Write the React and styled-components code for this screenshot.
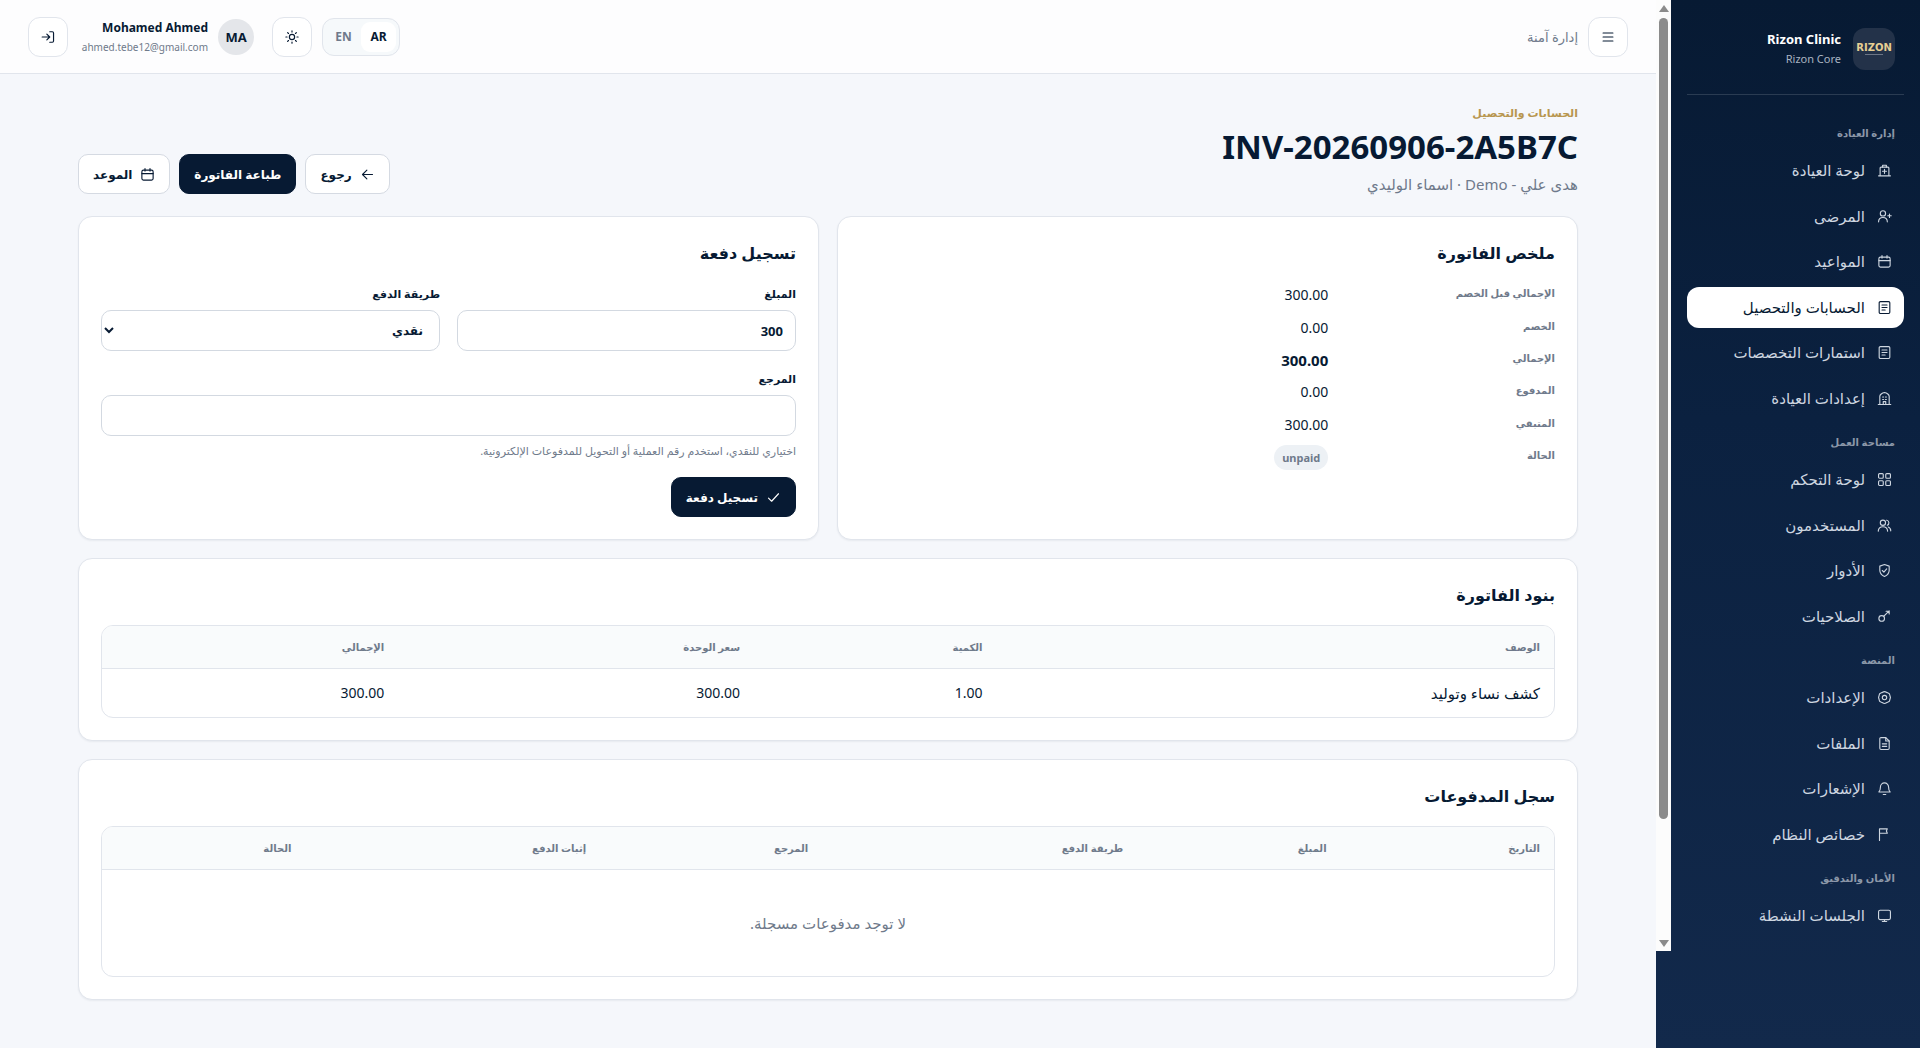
import React, { useState } from "react";
import styled, { createGlobalStyle, css } from "styled-components";

const navy = "#071a33";
const muted = "#6f7a8b";
const line = "#e1e5ec";

const GlobalStyle = createGlobalStyle`
  *, *::before, *::after { box-sizing: border-box; }
  body {
    margin: 0;
    background: #f5f7fb;
    color: ${navy};
    font-family: "Noto Sans", "Open Sans", "DejaVu Sans", sans-serif;
    font-size: 14px;
  }
  button, input, select { font: inherit; color: inherit; }
  h1, h2, p, dl, dd { margin: 0; }
`;

/* ---------- icons ---------- */

const ICONS = {
  clinic: <><path d="M2.5 20.5h19M5 20.5V8a1.5 1.5 0 0 1 1.5-1.5h11A1.5 1.5 0 0 1 19 8v12.5" /><path d="M9 6.5v-3h6v3M12 10v6.5M8.8 13.2h6.4" /></>,
  patient: <><circle cx="9.5" cy="7" r="4.2" /><path d="M2.5 20.5c0-4.5 3-7 7-7s7 2.5 7 7M20 8v5.5M17.2 10.7h5.6" /></>,
  calendar: <><rect x="3" y="5" width="18" height="16" rx="2.5" /><path d="M3 10.5h18M8 2.5v4M16 2.5v4" /></>,
  receipt: <><rect x="3.5" y="2.5" width="17" height="19" rx="2" /><path d="M8 8h8M8 12h8M8 16h5" /></>,
  building: <><path d="M2 21.5h20M4.5 21.5v-13C4.5 6 8 3 12 2.5c4 .5 7.5 3.500 7.500 6v13" /><path d="M9 9.5h1.5M13.5 9.5H15M9 13.5h1.5M13.5 13.5H15M10 21.5V17h4v4.5" /></>,
  grid: <><rect x="2.5" y="2.5" width="7.5" height="7.5" rx="1.5" /><rect x="14" y="2.5" width="7.5" height="7.5" rx="1.5" /><rect x="2.5" y="14" width="7.5" height="7.5" rx="1.5" /><rect x="14" y="14" width="7.5" height="7.5" rx="1.5" /></>,
  users: <><circle cx="9.5" cy="7.5" r="4.2" /><path d="M2 21c.3-4.5 3-7 7.5-7s7.2 2.5 7.5 7M15.5 3.5a4.2 4.2 0 0 1 1 8M18 14.5c2.5 1 4 3 4 6" /></>,
  shield: <><path d="M12 2.5 19.5 5v6.5c0 4.5-3 8-7.5 10-4.5-2-7.500-5.500-7.500-10V5z" /><path d="m8.5 12 2.5 2.5 4.5-5" /></>,
  key: <><circle cx="7.5" cy="15" r="4.5" /><path d="M11 11.5 19.5 3M14.5 3.5h5V8" /></>,
  settings: <><path d="M12 2.5c2.5 0 3 1.500 5 2s3.500 1.500 3.500 3.500S21.500 10.500 21.500 12s-1 2-1 4-1.500 3-3.500 3.500-2.500 2-5 2-3-1.500-5-2S3.500 18 3.500 16s-1-2.500-1-4 1-2 1-4S5 5 7 4.500s2.500-2 5-2z" /><circle cx="12" cy="12" r="3.5" /></>,
  file: <><path d="M14 2.5H6.5a2 2 0 0 0-2 2v15a2 2 0 0 0 2 2h11a2 2 0 0 0 2-2V8z" /><path d="M14 2.5V8h5.500M8.500 12.500h7M8.500 16.500h7" /></>,
  bell: <><path d="M3 17.5h18c-2-2-2.500-4-2.500-8a6.500 6.500 0 0 0-13 0c0 4-.5 6-2.500 8z" /><path d="M10 21.5h4" /></>,
  flag: <path d="M4 21.5V3h12.5L15 6.500l1.500 3.500H4" />,
  monitor: <><rect x="2.5" y="3.5" width="19" height="15" rx="2.5" /><path d="M8.5 21.5h7M12 18.5v3" /></>,
  menu: <path d="M3.5 5h17M3.5 12h17M3.5 19h17" />,
  sun: <><circle cx="12" cy="12" r="4.5" /><path d="M12 1.5v2M12 20.5v2M1.5 12h2M20.5 12h2M4.5 4.5 6 6M18 18l1.5 1.5M4.5 19.5 6 18M18 6l1.5-1.5" /></>,
  logout: <><path d="M2 12h13M10 7l5 5-5 5" /><path d="M15 3h4.5a2 2 0 0 1 2 2v14a2 2 0 0 1-2 2H15" /></>,
  back: <path d="M20 12H4M11 5l-7 7 7 7" />,
  check: <path d="m4 13 5 5L20 6" />,
};

const Svg = styled.svg`
  flex: none;
  width: ${(p) => p.$size}px;
  height: ${(p) => p.$size}px;
  fill: none;
  stroke: currentColor;
  stroke-width: ${(p) => p.$weight};
  stroke-linecap: round;
  stroke-linejoin: round;
`;

function Icon({ name, size = 15, weight = 1.8 }) {
  return (
    <Svg viewBox="0 0 24 24" $size={size} $weight={weight} aria-hidden="true">
      {ICONS[name]}
    </Svg>
  );
}

/* ---------- data ---------- */

const NAV = [
  {
    title: "إدارة العيادة",
    items: [
      ["clinic", "لوحة العيادة"],
      ["patient", "المرضى"],
      ["calendar", "المواعيد"],
      ["receipt", "الحسابات والتحصيل"],
      ["receipt", "استمارات التخصصات"],
      ["building", "إعدادات العيادة"],
    ],
  },
  {
    title: "مساحة العمل",
    items: [
      ["grid", "لوحة التحكم"],
      ["users", "المستخدمون"],
      ["shield", "الأدوار"],
      ["key", "الصلاحيات"],
    ],
  },
  {
    title: "المنصة",
    items: [
      ["settings", "الإعدادات"],
      ["file", "الملفات"],
      ["bell", "الإشعارات"],
      ["flag", "خصائص النظام"],
    ],
  },
  { title: "الأمان والتدقيق", items: [["monitor", "الجلسات النشطة"]] },
];

const SUMMARY = [
  ["الإجمالي قبل الخصم", "300.00"],
  ["الخصم", "0.00"],
  ["الإجمالي", "300.00", "total"],
  ["المدفوع", "0.00"],
  ["المتبقي", "300.00"],
  ["الحالة", "unpaid", "badge"],
];

// [label, column share in %]
const ITEM_COLS = [["الوصف", 38.4], ["الكمية", 16.7], ["سعر الوحدة", 24.5], ["الإجمالي", 20.4]];

const PAYMENT_COLS = [
  ["التاريخ", 14.7],
  ["المبلغ", 14],
  ["طريقة الدفع", 21.7],
  ["المرجع", 15.3],
  ["إثبات الدفع", 20.3],
  ["الحالة", 14],
];

/* ---------- shell ---------- */

const Shell = styled.div`
  display: flex;
  min-height: 100vh;
`;

const Sidebar = styled.aside`
  flex: none;
  display: flex;
  align-items: flex-start;
  width: 264px;
  background: linear-gradient(180deg, #071a33 0%, #0b2140 40%, #12294b 100%);
  color: #ced6e0;
`;

const SideScroll = styled.div`
  flex: 1;
  min-width: 0;
  padding: 16px;
`;

const ScrollTrack = styled.div`
  order: 1;
  flex: none;
  display: flex;
  flex-direction: column;
  align-items: center;
  gap: 6px;
  width: 15px;
  height: calc(100vh - 97px);
  padding: 5px 0 4px;
  background: #fcfcfc;
`;

const ScrollArrow = styled.span`
  border: 5px solid transparent;
  ${(p) =>
    p.$down
      ? css`border-top: 7px solid #8b8b8b; border-bottom: 0;`
      : css`border-bottom: 7px solid #8b8b8b; border-top: 0;`}
`;

const ScrollThumb = styled.span`
  width: 9px;
  height: 85%;
  margin-bottom: auto;
  border-radius: 5px;
  background: #8b8b8b;
`;

const Brand = styled.div`
  display: flex;
  align-items: center;
  gap: 12px;
  padding: 12px 9px 24px;
  border-bottom: 1px solid rgba(255, 255, 255, 0.14);
`;

const Logo = styled.div`
  display: flex;
  flex-direction: column;
  align-items: center;
  justify-content: center;
  gap: 2px;
  width: 42px;
  height: 42px;
  border-radius: 12px;
  background: #233249;
  color: #e6cf93;
  font-family: "DejaVu Sans", sans-serif;
  font-size: 10px;
  font-weight: 700;
  line-height: 8px;

  &::after {
    content: "";
    width: 18px;
    height: 1px;
    background: #6c7686;
  }
`;

const BrandName = styled.div`
  color: #fff;
  font-size: 13px;
  font-weight: 700;
  line-height: 20px;
`;

const BrandSub = styled.div`
  color: #a9b3c1;
  font-size: 11px;
  line-height: 20px;
  text-align: right;
`;

const Nav = styled.nav`
  padding-top: 15px;
`;

const NavTitle = styled.div`
  padding: 14px 9px 8px;
  color: #8c98a9;
  font-size: 10px;
  font-weight: 700;
  line-height: 18px;
`;

const NavList = styled.div`
  display: grid;
  gap: 4px;
`;

const NavLink = styled.a`
  display: flex;
  align-items: center;
  gap: 12px;
  padding: 8px 12px;
  border-radius: 12px;
  color: inherit;
  font-size: 15px;
  line-height: 1.7;
  text-decoration: none;
  white-space: nowrap;

  &[aria-current="page"] {
    background: #fff;
    color: ${navy};
  }
`;

const Page = styled.div`
  flex: 1;
  min-width: 0;
`;

const Topbar = styled.header`
  display: flex;
  align-items: center;
  justify-content: space-between;
  height: 74px;
  padding: 0 28px;
  border-bottom: 1px solid ${line};
  background: #fdfdfe;
`;

const Cluster = styled.div`
  display: flex;
  align-items: center;
  gap: 10px;
`;

const IconButton = styled.button`
  display: grid;
  place-items: center;
  width: 40px;
  height: 40px;
  padding: 0;
  border: 1px solid ${line};
  border-radius: 12px;
  background: #fff;
  cursor: pointer;
`;

const Hint = styled.span`
  color: ${muted};
  font-size: 13px;
`;

const LangSwitch = styled.div`
  display: flex;
  padding: 3px;
  border: 1px solid ${line};
  border-radius: 12px;
  background: #f6f9fb;
`;

const LangButton = styled.button`
  width: 35px;
  height: 30px;
  padding: 0;
  border: 0;
  border-radius: 9px;
  background: ${(p) => (p.$active ? "#fff" : "transparent")};
  color: ${(p) => (p.$active ? navy : muted)};
  font-size: 12px;
  font-weight: 700;
  cursor: pointer;
`;

const User = styled.div`
  display: flex;
  align-items: center;
  gap: 10px;
  padding-right: 8px;
`;

const UserText = styled.div`
  min-width: 130px;
`;

const Avatar = styled.span`
  display: grid;
  place-items: center;
  width: 36px;
  height: 36px;
  border-radius: 50%;
  background: #e4e6ea;
  font-size: 13px;
  font-weight: 700;
`;

const UserName = styled.div`
  font-size: 12px;
  font-weight: 700;
  line-height: 20px;
`;

const UserMail = styled.div`
  color: ${muted};
  font-size: 10px;
  line-height: 18px;
`;

/* ---------- page ---------- */

const Main = styled.main`
  display: grid;
  gap: 18px;
  max-width: 1556px;
  margin: 0 auto;
  padding: 28px;
`;

const PageHead = styled.div`
  display: flex;
  align-items: flex-end;
  justify-content: space-between;
`;

const Eyebrow = styled.p`
  color: #b8964f;
  font-size: 11px;
  font-weight: 700;
  line-height: 22px;
`;

const Title = styled.h1`
  font-size: 33px;
  font-weight: 700;
  line-height: 46px;
`;

const Subtitle = styled.p`
  color: ${muted};
  font-size: 15px;
  line-height: 28px;
`;

const Actions = styled.div`
  display: flex;
  gap: 9px;
  padding-bottom: 4px;
`;

const Button = styled.button`
  display: inline-flex;
  align-items: center;
  gap: 8px;
  height: 40px;
  padding: 0 14px;
  border: 1px solid ${(p) => (p.$primary ? navy : "#d5dae2")};
  border-radius: 10px;
  background: ${(p) => (p.$primary ? navy : "#fff")};
  color: ${(p) => (p.$primary ? "#fff" : navy)};
  font-size: 12px;
  font-weight: 700;
  white-space: nowrap;
  cursor: pointer;
`;

const TwoCols = styled.div`
  display: grid;
  grid-template-columns: 1fr 1fr;
  gap: 18px;
`;

const Card = styled.section`
  padding: 22px;
  border: 1px solid ${line};
  border-radius: 14px;
  background: #fff;
  box-shadow: 0 1px 2px rgba(7, 26, 51, 0.06);
`;

const CardTitle = styled.h2`
  margin-bottom: 16px;
  font-size: 16px;
  font-weight: 700;
  line-height: 28px;
`;

const Summary = styled.dl`
  display: grid;
  grid-template-columns: 9fr 20fr;
  gap: 8px 16px;
`;

const Term = styled.dt`
  color: ${muted};
  font-size: 10px;
  font-weight: 700;
  line-height: 20px;
`;

const Value = styled.dd`
  font-size: 14px;
  line-height: 1.75;

  ${(p) =>
    p.$kind === "total" &&
    css`
      font-size: 15px;
      font-weight: 700;
      line-height: 24px;
    `}
`;

const Badge = styled.span`
  display: inline-block;
  padding: 0 8px;
  border-radius: 999px;
  background: #edf1f5;
  color: ${muted};
  font-size: 11px;
  font-weight: 700;
  line-height: 25px;
`;

const Form = styled.form`
  display: grid;
  grid-template-columns: 1fr 1fr;
  gap: 17px;
`;

const Field = styled.div`
  display: grid;
  gap: 5px;
  grid-column: ${(p) => (p.$wide ? "1 / -1" : "auto")};
`;

const Label = styled.label`
  font-size: 11px;
  font-weight: 700;
  line-height: 22px;
`;

const control = css`
  width: 100%;
  height: 41px;
  border: 1px solid #d3d9e1;
  border-radius: 10px;
  background-color: #fff;
  font-weight: 700;
`;

const Input = styled.input`
  ${control}
  padding: 0 12px;
  font-size: 13px;
`;

const Select = styled.select`
  ${control}
  padding: 0 12px 0 0;
  font-size: 12px;
`;

const Help = styled.p`
  color: ${muted};
  font-size: 11px;
  line-height: 19px;
`;

const TableWrap = styled.div`
  overflow: hidden;
  border: 1px solid ${line};
  border-radius: 12px;
`;

const Table = styled.table`
  width: 100%;
  border-collapse: collapse;
  table-layout: fixed;
`;

const Th = styled.th`
  width: ${(p) => p.$share}%;
  height: 42px;
  padding: 0 14px;
  border-bottom: 1px solid ${line};
  background: #f9fbfc;
  color: ${muted};
  font-size: 10px;
  font-weight: 700;
  text-align: right;
`;

const Td = styled.td`
  height: 49px;
  padding: 0 14px;
  font-size: 14px;

  &:first-child {
    font-size: 15px;
  }
`;

const Empty = styled.td`
  height: 107px;
  color: ${muted};
  font-size: 15px;
  text-align: center;
`;

function TableHead({ cols }) {
  return (
    <thead>
      <tr>
        {cols.map(([label, share]) => (
          <Th key={label} $share={share} scope="col">{label}</Th>
        ))}
      </tr>
    </thead>
  );
}

function SideNav() {
  return (
    <Sidebar>
      <ScrollTrack aria-hidden="true">
        <ScrollArrow />
        <ScrollThumb />
        <ScrollArrow $down />
      </ScrollTrack>
      <SideScroll>
        <Brand>
          <Logo>RIZON</Logo>
          <div>
            <BrandName>Rizon Clinic</BrandName>
            <BrandSub>Rizon Core</BrandSub>
          </div>
        </Brand>
        <Nav>
          {NAV.map((group) => (
            <div key={group.title}>
              <NavTitle>{group.title}</NavTitle>
              <NavList>
                {group.items.map(([icon, label]) => (
                  <NavLink
                    key={label}
                    href="#"
                    aria-current={label === "الحسابات والتحصيل" ? "page" : undefined}
                  >
                    <Icon name={icon} />
                    {label}
                  </NavLink>
                ))}
              </NavList>
            </div>
          ))}
        </Nav>
      </SideScroll>
    </Sidebar>
  );
}

function Header() {
  const [lang, setLang] = useState("AR");
  return (
    <Topbar>
      <Cluster>
        <IconButton type="button" aria-label="القائمة"><Icon name="menu" size={14} /></IconButton>
        <Hint>إدارة آمنة</Hint>
      </Cluster>
      <Cluster>
        <LangSwitch>
          {["AR", "EN"].map((code) => (
            <LangButton key={code} type="button" $active={lang === code} onClick={() => setLang(code)}>
              {code}
            </LangButton>
          ))}
        </LangSwitch>
        <IconButton type="button" aria-label="المظهر"><Icon name="sun" size={14} weight={2} /></IconButton>
        <User>
          <Avatar>MA</Avatar>
          <UserText>
            <UserName>Mohamed Ahmed</UserName>
            <UserMail>ahmed.tebe12@gmail.com</UserMail>
          </UserText>
        </User>
        <IconButton type="button" aria-label="خروج"><Icon name="logout" size={14} weight={2} /></IconButton>
      </Cluster>
    </Topbar>
  );
}

function PaymentForm() {
  const [amount, setAmount] = useState("300");
  return (
    <Card>
      <CardTitle>تسجيل دفعة</CardTitle>
      <Form onSubmit={(e) => e.preventDefault()}>
        <Field>
          <Label htmlFor="amount">المبلغ</Label>
          <Input id="amount" inputMode="decimal" value={amount} onChange={(e) => setAmount(e.target.value)} />
        </Field>
        <Field>
          <Label htmlFor="method">طريقة الدفع</Label>
          <Select id="method"><option>نقدي</option></Select>
        </Field>
        <Field $wide>
          <Label htmlFor="reference">المرجع</Label>
          <Input id="reference" aria-describedby="reference-help" />
          <Help id="reference-help">اختياري للنقدي، استخدم رقم العملية أو التحويل للمدفوعات الإلكترونية.</Help>
        </Field>
        <Field $wide>
          <div>
            <Button type="submit" $primary><Icon name="check" />تسجيل دفعة</Button>
          </div>
        </Field>
      </Form>
    </Card>
  );
}

export default function App() {
  return (
    <Shell dir="rtl" lang="ar">
      <GlobalStyle />
      <SideNav />
      <Page>
        <Header />
        <Main>
          <PageHead>
            <div>
              <Eyebrow>الحسابات والتحصيل</Eyebrow>
              <Title>INV-20260906-2A5B7C</Title>
              <Subtitle>هدى علي - Demo · اسماء الوليدي</Subtitle>
            </div>
            <Actions>
              <Button type="button"><Icon name="back" />رجوع</Button>
              <Button type="button" $primary>طباعة الفاتورة</Button>
              <Button type="button"><Icon name="calendar" />الموعد</Button>
            </Actions>
          </PageHead>

          <TwoCols>
            <Card>
              <CardTitle>ملخص الفاتورة</CardTitle>
              <Summary>
                {SUMMARY.map(([label, value, kind]) => (
                  <React.Fragment key={label}>
                    <Term>{label}</Term>
                    <Value $kind={kind}>{kind === "badge" ? <Badge>{value}</Badge> : value}</Value>
                  </React.Fragment>
                ))}
              </Summary>
            </Card>
            <PaymentForm />
          </TwoCols>

          <Card>
            <CardTitle>بنود الفاتورة</CardTitle>
            <TableWrap>
              <Table>
                <TableHead cols={ITEM_COLS} />
                <tbody>
                  <tr>
                    <Td>كشف نساء وتوليد</Td>
                    <Td>1.00</Td>
                    <Td>300.00</Td>
                    <Td>300.00</Td>
                  </tr>
                </tbody>
              </Table>
            </TableWrap>
          </Card>

          <Card>
            <CardTitle>سجل المدفوعات</CardTitle>
            <TableWrap>
              <Table>
                <TableHead cols={PAYMENT_COLS} />
                <tbody>
                  <tr>
                    <Empty colSpan={PAYMENT_COLS.length}>لا توجد مدفوعات مسجلة.</Empty>
                  </tr>
                </tbody>
              </Table>
            </TableWrap>
          </Card>
        </Main>
      </Page>
    </Shell>
  );
}
